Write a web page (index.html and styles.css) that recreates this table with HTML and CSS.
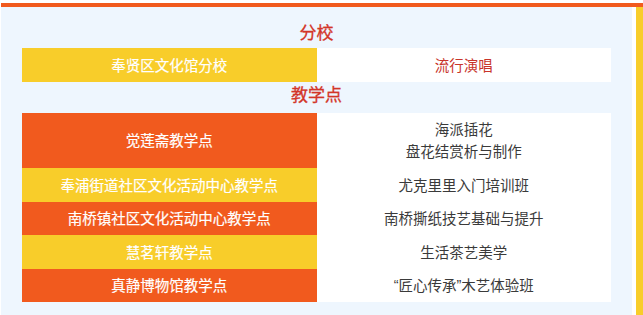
FILE: index.html
```html
<!DOCTYPE html>
<html lang="zh">
<head>
<meta charset="utf-8">
<link rel="stylesheet" href="styles.css">
</head>
<body>
<div class="frame">
  <div class="inner">
    <div class="panel">
      <h2 class="heading heading-first">分校</h2>
      <div class="table">
        <div class="cell name yellow">奉贤区文化馆分校</div>
        <div class="cell course red">流行演唱</div>
      </div>
      <h2 class="heading heading-second">教学点</h2>
      <div class="table">
        <div class="cell name orange">觉莲斋教学点</div>
        <div class="cell course">海派插花<br>盘花结赏析与制作</div>
        <div class="cell name yellow">奉浦街道社区文化活动中心教学点</div>
        <div class="cell course">尤克里里入门培训班</div>
        <div class="cell name orange">南桥镇社区文化活动中心教学点</div>
        <div class="cell course">南桥撕纸技艺基础与提升</div>
        <div class="cell name yellow">慧茗轩教学点</div>
        <div class="cell course">生活茶艺美学</div>
        <div class="cell name orange">真静博物馆教学点</div>
        <div class="cell course"><span class="quote">“</span>匠心传承<span class="quote">”</span>木艺体验班</div>
      </div>
    </div>
    <div class="side"></div>
  </div>
</div>
</body>
</html>
```

FILE: styles.css
```css
html, body {
  margin: 0;
  padding: 0;
  background: #ffffff;
}
body {
  font-family: "Microsoft YaHei", "Noto Sans CJK SC", "Noto Sans", sans-serif;
}
.frame {
  margin: 3px 0 0 1px;
  border-top: 4px solid #f15a1e;
  height: 308px;
}
.inner {
  display: flex;
  height: 100%;
}
.panel {
  width: 631px;
  background: #eef6fe;
  padding: 0 21px 10px;
  box-sizing: border-box;
}
.side {
  width: 7px;
  margin-left: 4px;
  background: #f8cd2a;
}
.heading {
  margin: 0;
  text-align: center;
  font-size: 17px;
  font-weight: normal;
  line-height: 24px;
  color: #d33528;
  -webkit-text-stroke: 0.3px #d33528;
}
.heading-first {
  padding: 13px 0 4px;
}
.heading-second {
  padding: 0 0 7px;
}
.table {
  display: grid;
  grid-template-columns: 1fr 1fr;
}
.cell {
  text-align: center;
  font-size: 14.5px;
  line-height: 22px;
  padding: 5.75px 0;
  display: flex;
  align-items: center;
  justify-content: center;
}
.name {
  color: #ffffff;
  -webkit-text-stroke: 0.2px #ffffff;
}
.course {
  background: #ffffff;
  color: #3a3a3a;
}
.quote {
  font-family: "Liberation Sans", sans-serif;
}
.yellow {
  background: #f8cd2a;
}
.orange {
  background: #f15a1e;
}
.course.red {
  color: #c8342a;
}
```
